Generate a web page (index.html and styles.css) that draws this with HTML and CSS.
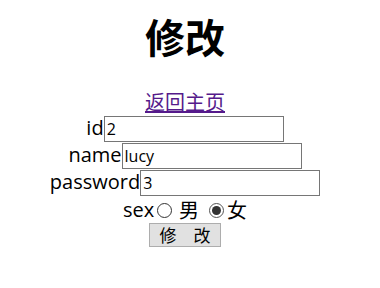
FILE: index.html
```html
<!DOCTYPE html>
<html lang="zh">
<head>
<meta charset="utf-8">
<title>修改</title>
<link rel="stylesheet" href="styles.css">
</head>
<body>
<div class="page">
  <h1 class="title">修改</h1>
  <form class="form">
    <div class="row link-row"><a class="home" href="#">返回主页</a></div>
    <div class="row"><label class="label">id</label><input class="field" type="text" value="2"></div>
    <div class="row"><label class="label">name</label><input class="field" type="text" value="lucy"></div>
    <div class="row"><label class="label">password</label><input class="field" type="text" value="3"></div>
    <div class="row sex-row">
      <span class="label">sex</span>
      <input class="radio" type="radio" name="sex">
      <span class="opt opt-first">男</span>
      <input class="radio radio-second" type="radio" name="sex" checked>
      <span class="opt">女</span>
    </div>
    <div class="row btn-row"><button class="btn" type="button">修　改</button></div>
  </form>
</div>
</body>
</html>
```
FILE: styles.css
```css
html, body {
  background: #ffffff;
}
body {
  margin: 10px 0 0 10px;
  font-family: "Open Sans", "Noto Sans CJK SC", sans-serif;
  color: #000;
}
.page {
  width: 350px;
}
.title {
  margin: 0 0 27px 0;
  font-family: "Noto Sans CJK SC", sans-serif;
  font-size: 40px;
  font-weight: 700;
  line-height: 52px;
  text-align: center;
}
.form {
  display: flex;
  flex-direction: column;
}
.row {
  display: flex;
  justify-content: center;
  align-items: baseline;
  height: 27px;
}
.link-row {
  height: 26px;
  align-items: center;
}
.home {
  font-family: "Noto Sans CJK SC", sans-serif;
  font-size: 20px;
  line-height: 26px;
  color: #551a8b;
  text-decoration: underline;
}
.label {
  font-size: 20px;
  line-height: 26px;
}
.field {
  box-sizing: border-box;
  width: 180px;
  height: 26px;
  margin: 0;
  padding: 0 2px;
  border: 1px solid #767676;
  font-family: "Open Sans", "Noto Sans CJK SC", sans-serif;
  font-size: 16px;
  color: #000;
  background: #fff;
}
.sex-row {
  align-items: center;
}
.radio {
  appearance: none;
  -webkit-appearance: none;
  box-sizing: border-box;
  width: 15px;
  height: 15px;
  margin: 1px 0 0 3px;
  border: 1px solid #333;
  border-radius: 50%;
  background: #fff;
  position: relative;
}
.radio:checked {
  border-color: #555;
}
.radio:checked::after {
  content: "";
  position: absolute;
  left: 2px;
  top: 2px;
  width: 9px;
  height: 9px;
  border-radius: 50%;
  background: #333;
}
.radio-second {
  margin-left: 10px;
}
.opt {
  font-family: "Noto Sans CJK SC", sans-serif;
  font-size: 20px;
  font-weight: 400;
  line-height: 26px;
  margin-left: 3px;
}
.opt-first {
  margin-left: 7px;
}
.btn-row {
  align-items: flex-start;
}
.btn {
  box-sizing: border-box;
  width: 72px;
  height: 24px;
  margin: 0;
  padding: 0;
  border: 1px solid #adadad;
  background: #e1e1e1;
  font-family: "Noto Sans CJK SC", sans-serif;
  font-size: 17px;
  line-height: 22px;
  color: #000;
}
```
